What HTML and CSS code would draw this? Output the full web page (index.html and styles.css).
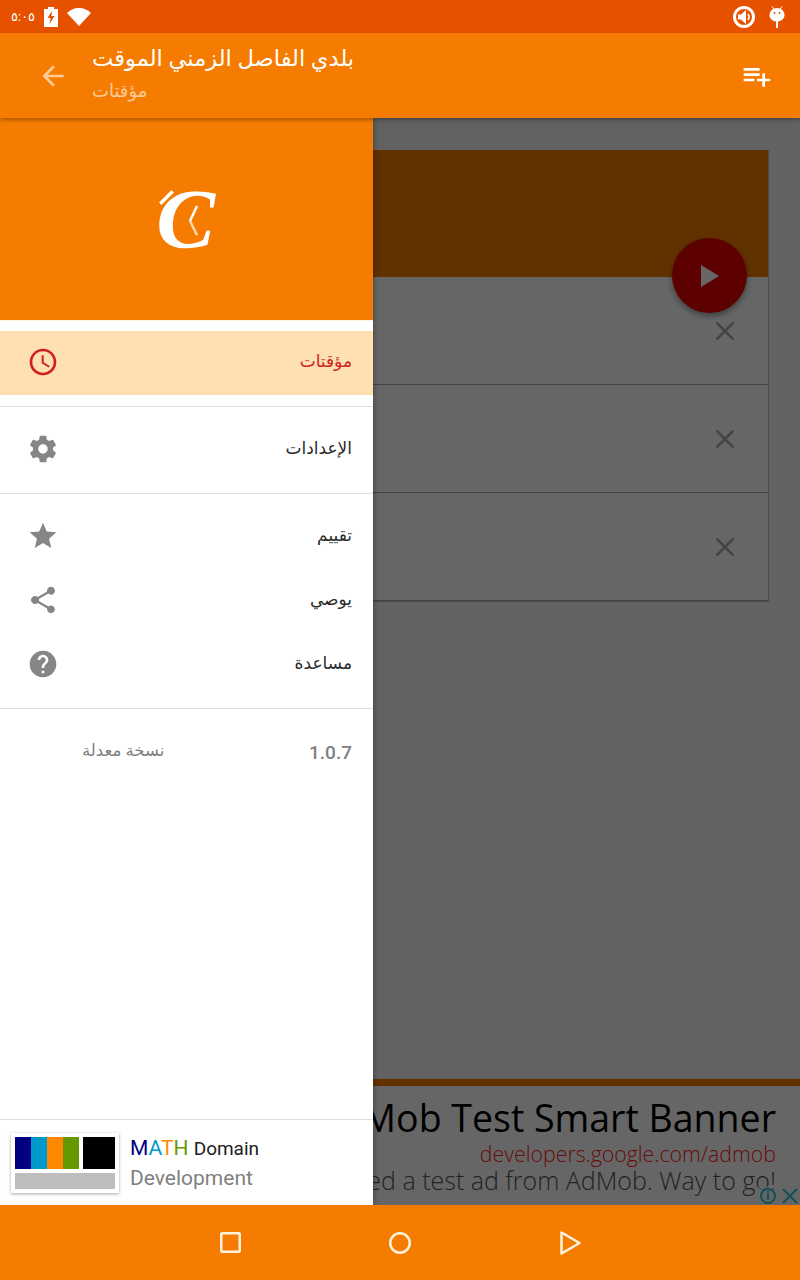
FILE: index.html
```html
<!DOCTYPE html>
<html lang="ar">
<head>
    <meta charset="UTF-8">
    <meta name="viewport" content="width=device-width, initial-scale=1.0">
    <title>بلدي الفاصل الزمني الموقت</title>
    <link rel="stylesheet" href="styles.css">
</head>
<body>
    <div class="statusbar">
        <div class="status-group">
            <span class="status-time">٥:٠٥</span>
            <svg class="battery" width="14" height="20" viewBox="0 0 14 20"><path fill="#fff" d="M4 0h6v2h4v18H0V2h4z"/><path fill="#e65100" d="M8 4L3.5 11H6.5L5.5 17L10.5 9H7.5z"/></svg>
            <svg class="wifi" width="24" height="18" viewBox="0 0 24 18"><path fill="#fff" d="M12 18L0 5C3 2 7 0 12 0s9 2 12 5z"/></svg>
        </div>
        <div class="status-group status-right">
            <svg width="22" height="22" viewBox="0 0 22 22"><circle cx="11" cy="11" r="11" fill="#fff"/><circle cx="11" cy="11" r="8" fill="#e65100"/><path fill="#fff" d="M5 8.5h3L13 4v14l-5-4.5H5z"/><path fill="none" stroke="#fff" stroke-width="1.5" d="M15 8c1.3 1.800 1.3 4.200 0 6"/></svg>
            <svg width="16" height="22" viewBox="0 0 16 22"><path stroke="#fff" stroke-width="1" d="M3 .5L5 3.5M13 .5L11 3.5"/><path fill="#fff" d="M8 2c4 0 7.5 3 7.5 7S12 15.5 8 15.5.5 13 .5 9 4 2 8 2z"/><rect x="7" y="15" width="2" height="7" fill="#fff"/><circle cx="5.5" cy="7" r="1" fill="#e65100"/><circle cx="10.5" cy="7" r="1" fill="#e65100"/></svg>
        </div>
    </div>

    <div class="toolbar">
        <svg class="back-icon" width="32" height="32" viewBox="0 0 24 24"><path d="M20 11H7.83l5.59-5.59L12 4l-8 8 8 8 1.41-1.41L7.83 13H20v-2z"/></svg>
        <div class="toolbar-titles">
            <div class="toolbar-title">بلدي الفاصل الزمني الموقت</div>
            <div class="toolbar-sub">مؤقتات</div>
        </div>
        <svg class="add-icon" width="32" height="32" viewBox="0 0 24 24"><path d="M14 10H2v2h12v-2zm0-4H2v2h12V6zm4 8v-4h-2v4h-4v2h4v4h2v-4h4v-2h-4zM2 16h8v-2H2v2z"/></svg>
    </div>

    <div class="main">
        <div class="content">
            <div class="timer-card">
                <div class="card-head"></div>
                <div class="card-row"><svg class="close-icon" width="32" height="32" viewBox="0 0 24 24"><path d="M19 6.41L17.59 5 12 10.59 6.41 5 5 6.41 10.59 12 5 17.59 6.41 19 12 13.41 17.59 19 19 17.59 13.41 12z"/></svg></div>
                <div class="card-row"><svg class="close-icon" width="32" height="32" viewBox="0 0 24 24"><path d="M19 6.41L17.59 5 12 10.59 6.41 5 5 6.41 10.59 12 5 17.59 6.41 19 12 13.41 17.59 19 19 17.59 13.41 12z"/></svg></div>
                <div class="card-row"><svg class="close-icon" width="32" height="32" viewBox="0 0 24 24"><path d="M19 6.41L17.59 5 12 10.59 6.41 5 5 6.41 10.59 12 5 17.59 6.41 19 12 13.41 17.59 19 19 17.59 13.41 12z"/></svg></div>
                <div class="fab"><svg width="20" height="22" viewBox="0 0 20 22"><path fill="#fff" d="M1 0l18 11L1 22z"/></svg></div>
            </div>
            <div class="test-ad">
                <div class="ad-title">AdMob Test Smart Banner</div>
                <div class="ad-url">developers.google.com/admob</div>
                <div class="ad-text">You've displayed a test ad from AdMob. Way to go!</div>
                <div class="ad-choices">
                    <svg width="20" height="19" viewBox="0 0 20 19"><circle cx="10" cy="10" r="7" fill="none" stroke="#35c5d5" stroke-width="2"/><rect x="9" y="8" width="2" height="6" fill="#35c5d5"/><rect x="9" y="5" width="2" height="2" fill="#35c5d5"/></svg>
                    <svg width="20" height="19" viewBox="0 0 20 19"><path fill="none" stroke="#35c5d5" stroke-width="2" d="M3 3l14 14M17 3L3 17"/></svg>
                </div>
            </div>
        </div>
        <div class="scrim"></div>

        <div class="drawer">
            <div class="drawer-head">
                <svg class="logo" width="90" height="90" viewBox="-10 -8 90 90">
                    <text x="4" y="66" class="logo-letter" transform="scale(1.05 1)">C</text>
                    <rect x="5" y="13" width="19" height="5" fill="#fff" stroke="#f57c00" stroke-width="1.5" transform="rotate(-45 14.5 15.5)"/>
                    <path fill="none" stroke="#fff" stroke-width="2.5" d="M45 24l-7 15"/>
                    <path fill="none" stroke="#ffd9a8" stroke-width="2.5" d="M38 39l7 14"/>
                </svg>
            </div>
            <div class="drawer-section">
                <div class="menu-item active">
                    <svg width="32" height="32" viewBox="0 0 24 24"><path d="M11.99 2C6.47 2 2 6.48 2 12s4.47 10 9.99 10C17.52 22 22 17.52 22 12S17.52 2 11.99 2zM12 20c-4.42 0-8-3.58-8-8s3.58-8 8-8 8 3.58 8 8-3.58 8-8 8zm.5-13H11v6l5.25 3.15.75-1.23-4.5-2.67z"/></svg>
                    <span>مؤقتات</span>
                </div>
            </div>
            <div class="drawer-section">
                <div class="menu-item">
                    <svg width="32" height="32" viewBox="0 0 24 24"><path d="M19.43 12.98c.04-.32.07-.64.07-.98s-.03-.66-.07-.98l2.11-1.65c.19-.15.24-.42.12-.64l-2-3.46c-.12-.22-.39-.3-.61-.22l-2.49 1c-.52-.4-1.08-.73-1.69-.98l-.38-2.65C14.46 2.18 14.25 2 14 2h-4c-.25 0-.46.18-.49.42l-.38 2.65c-.61.25-1.17.59-1.69.98l-2.49-1c-.23-.09-.49 0-.61.22l-2 3.46c-.13.22-.07.49.12.64l2.11 1.65c-.04.32-.07.65-.07.98s.03.66.07.98l-2.11 1.65c-.19.15-.24.42-.12.64l2 3.46c.12.22.39.3.61.22l2.49-1c.52.4 1.08.73 1.69.98l.38 2.65c.03.24.24.42.49.42h4c.25 0 .46-.18.49-.42l.38-2.65c.61-.25 1.17-.59 1.69-.98l2.49 1c.23.09.49 0 .61-.22l2-3.46c.12-.22.07-.49-.12-.64l-2.11-1.65zM12 15.5c-1.93 0-3.5-1.57-3.5-3.5s1.57-3.5 3.5-3.5 3.5 1.57 3.5 3.5-1.57 3.5-3.5 3.5z"/></svg>
                    <span>الإعدادات</span>
                </div>
            </div>
            <div class="drawer-section">
                <div class="menu-item">
                    <svg width="32" height="32" viewBox="0 0 24 24"><path d="M12 17.27L18.18 21l-1.64-7.03L22 9.24l-7.19-.61L12 2 9.19 8.63 2 9.24l5.46 4.73L5.82 21z"/></svg>
                    <span>تقييم</span>
                </div>
                <div class="menu-item">
                    <svg width="32" height="32" viewBox="0 0 24 24"><path d="M18 16.08c-.76 0-1.44.3-1.96.77L8.91 12.7c.05-.23.09-.46.09-.7s-.04-.47-.09-.7l7.05-4.11c.54.5 1.25.81 2.04.81 1.66 0 3-1.34 3-3s-1.34-3-3-3-3 1.34-3 3c0 .24.04.47.09.7L8.04 9.81C7.5 9.31 6.79 9 6 9c-1.66 0-3 1.34-3 3s1.34 3 3 3c.79 0 1.5-.31 2.04-.81l7.12 4.16c-.05.21-.08.43-.08.65 0 1.61 1.31 2.92 2.92 2.92 1.61 0 2.92-1.31 2.92-2.92s-1.31-2.92-2.92-2.92z"/></svg>
                    <span>يوصي</span>
                </div>
                <div class="menu-item">
                    <svg width="32" height="32" viewBox="0 0 24 24"><path d="M12 2C6.48 2 2 6.48 2 12s4.48 10 10 10 10-4.48 10-10S17.52 2 12 2zm1 17h-2v-2h2v2zm2.07-7.75l-.9.92C13.45 12.9 13 13.5 13 15h-2v-.5c0-1.1.45-2.1 1.17-2.83l1.24-1.26c.37-.36.59-.86.59-1.41 0-1.1-.9-2-2-2s-2 .9-2 2H8c0-2.21 1.79-4 4-4s4 1.79 4 4c0 .88-.36 1.68-.93 2.25z"/></svg>
                    <span>مساعدة</span>
                </div>
            </div>
            <div class="version-row">
                <span class="version-note">نسخة معدلة</span>
                <span class="version-num">1.0.7</span>
            </div>
            <div class="drawer-ad">
                <div class="ad-thumb">
                    <div class="thumb-bars">
                        <i class="bar-navy"></i><i class="bar-blue"></i><i class="bar-orange"></i><i class="bar-green"></i><i class="bar-black"></i>
                    </div>
                    <div class="thumb-grey"></div>
                </div>
                <div class="ad-names">
                    <div class="ad-name"><span class="c-navy">M</span><span class="c-blue">A</span><span class="c-orange">T</span><span class="c-green">H</span> <span class="ad-domain">Domain</span></div>
                    <div class="ad-dev">Development</div>
                </div>
            </div>
        </div>
    </div>

    <div class="navbar">
        <svg width="21" height="21" viewBox="0 0 21 21"><rect x="1.25" y="1.25" width="18.5" height="18.5" rx="1" fill="none" stroke="#fff3e0" stroke-width="2.5"/></svg>
        <svg width="22" height="22" viewBox="0 0 22 22"><circle cx="11" cy="11" r="9.75" fill="none" stroke="#fff3e0" stroke-width="2.5"/></svg>
        <svg class="nav-back" width="21" height="24" viewBox="0 0 21 24"><path d="M1.5 1.5L19.5 12 1.5 22.5z" fill="none" stroke="#fff3e0" stroke-width="2.5" stroke-linejoin="round"/></svg>
    </div>
</body>
</html>
```

FILE: styles.css
```css
* {
    margin: 0;
    padding: 0;
    box-sizing: border-box;
}
body {
    width: 800px;
    height: 1280px;
    display: flex;
    flex-direction: column;
    overflow: hidden;
    font-family: Roboto, "Noto Sans", "DejaVu Sans", sans-serif;
    background: #fafafa;
}
svg {
    display: block;
    flex-shrink: 0;
}

/* status bar */
.statusbar {
    height: 33px;
    background: #e65100;
    display: flex;
    align-items: center;
    justify-content: space-between;
    padding: 0 15px 0 11px;
    color: #fff;
}
.status-group {
    display: flex;
    align-items: center;
    gap: 9px;
}
.status-right {
    gap: 14px;
}
.status-time {
    font-size: 13px;
    width: 24px;
}

/* toolbar */
.toolbar {
    height: 85px;
    background: #f57c00;
    display: flex;
    align-items: center;
    padding: 0 27px 0 37px;
    position: relative;
    z-index: 5;
    box-shadow: 0 2px 4px rgba(0, 0, 0, 0.3);
}
.back-icon {
    fill: rgba(255, 255, 255, 0.6);
}
.add-icon {
    fill: #fff;
    margin-left: auto;
}
.toolbar-titles {
    margin-left: 23px;
    margin-top: -3px;
}
.toolbar-title {
    font-size: 22.6px;
    color: #fff;
    line-height: 30px;
}
.toolbar-sub {
    font-size: 18px;
    color: rgba(255, 255, 255, 0.6);
    line-height: 26px;
    margin-top: 4px;
}

/* page behind the drawer */
.main {
    flex: 1;
    position: relative;
    overflow: hidden;
    min-height: 0;
}
.content {
    height: 100%;
    display: flex;
    flex-direction: column;
    justify-content: space-between;
    padding-top: 32px;
    background: #f5f5f5;
}
.timer-card {
    margin: 0 31px 0 32px;
    border: 1px solid #bdbdbd;
    border-top: none;
    position: relative;
}
.card-head {
    height: 127px;
    background: #f57c00;
    margin-left: -1px;
}
.card-row {
    height: 108px;
    background: #fff;
    border-bottom: 1px solid #aaa;
    display: flex;
    align-items: center;
    justify-content: flex-end;
    padding-right: 27px;
}
.close-icon {
    fill: #aaa;
}
.fab {
    position: absolute;
    top: 88px;
    right: 21px;
    width: 75px;
    height: 75px;
    border-radius: 50%;
    background: #e80000;
    display: flex;
    align-items: center;
    justify-content: center;
    box-shadow: 0 3px 6px rgba(0, 0, 0, 0.4);
}
.test-ad {
    height: 126px;
    border-top: 7px solid #f57c00;
    background: #fff;
    padding: 8px 24px 0 0;
    text-align: right;
    font-family: "Open Sans", sans-serif;
    white-space: nowrap;
    position: relative;
    overflow: hidden;
}
.ad-title {
    font-size: 37.5px;
    line-height: 48px;
    color: #000;
}
.ad-url {
    font-size: 21.3px;
    line-height: 24px;
    color: #ff2020;
    font-weight: 300;
}
.ad-text {
    font-size: 25px;
    line-height: 28px;
    color: #555;
    font-weight: 300;
}
.ad-choices {
    position: absolute;
    right: 0;
    bottom: 0;
    display: flex;
    gap: 2px;
    background: rgba(255, 255, 255, 0.6);
}
.scrim {
    position: absolute;
    inset: 0;
    background: rgba(0, 0, 0, 0.6);
}

/* drawer */
.drawer {
    position: absolute;
    top: 0;
    left: 0;
    bottom: 0;
    width: 373px;
    background: #fff;
    display: flex;
    flex-direction: column;
    box-shadow: 1px 0 6px rgba(0, 0, 0, 0.3);
}
.drawer-head {
    height: 203px;
    background: #f57c00;
    border-bottom: 1px solid #fff3e0;
    display: flex;
    align-items: center;
    justify-content: center;
}
.logo {
    overflow: visible;
}
.logo-letter {
    font-family: "Liberation Serif", serif;
    font-style: italic;
    font-weight: bold;
    font-size: 84px;
    fill: #fff;
}
.drawer-section {
    padding: 10px 0 11px;
    border-bottom: 1px solid #e0e0e0;
}
.drawer-section + .drawer-section {
    padding-top: 11px;
}
.menu-item {
    height: 64px;
    display: flex;
    align-items: center;
    justify-content: space-between;
    padding: 0 21px 0 26.5px;
    font-size: 17px;
    color: #2a2a2a;
}
.menu-item svg {
    fill: #868686;
    margin-bottom: 2px;
}
.menu-item span {
    margin-bottom: 4px;
}
.menu-item.active {
    background: #ffe0b2;
    color: #d01f1f;
}
.menu-item.active svg {
    fill: #d01f1f;
}
.version-row {
    height: 86px;
    display: flex;
    align-items: center;
    justify-content: space-between;
    padding: 0 21px 0 82px;
    color: #808080;
}
.version-note {
    font-size: 16.5px;
    margin-bottom: 3px;
}
.version-num {
    font-size: 19px;
    font-weight: 500;
}

/* house ad at the foot of the drawer */
.drawer-ad {
    margin-top: auto;
    height: 86px;
    border-top: 1px solid #e0e0e0;
    display: flex;
    align-items: center;
    padding: 0 0 0 11px;
    gap: 11px;
}
.ad-thumb {
    width: 108px;
    height: 60px;
    padding: 4px;
    background: #fff;
    box-shadow: 0 1px 3px rgba(0, 0, 0, 0.35);
}
.thumb-bars {
    display: flex;
    height: 32px;
}
.thumb-bars i {
    width: 16px;
}
.thumb-bars .bar-navy { background: #000080; }
.thumb-bars .bar-blue { background: #0099cc; }
.thumb-bars .bar-orange { background: #ff8800; }
.thumb-bars .bar-green { background: #669900; }
.thumb-bars .bar-black {
    width: 32px;
    margin-left: 4px;
    background: #000;
}
.thumb-grey {
    height: 16px;
    margin-top: 4px;
    background: #bdbdbd;
}
.ad-names {
    padding-top: 2px;
}
.ad-name {
    font-size: 21px;
    line-height: 28px;
}
.ad-domain {
    font-size: 19px;
    color: #212121;
}
.c-navy { color: #000080; }
.c-blue { color: #0099cc; }
.c-orange { color: #ff8800; }
.c-green { color: #669900; }
.ad-dev {
    font-size: 21px;
    line-height: 30px;
    color: #808080;
}

/* nav bar */
.navbar {
    height: 75px;
    background: #f57c00;
    display: flex;
    align-items: center;
    justify-content: center;
    gap: 148px;
    position: relative;
    z-index: 5;
}
.nav-back {
    margin-left: 1px;
}
```
